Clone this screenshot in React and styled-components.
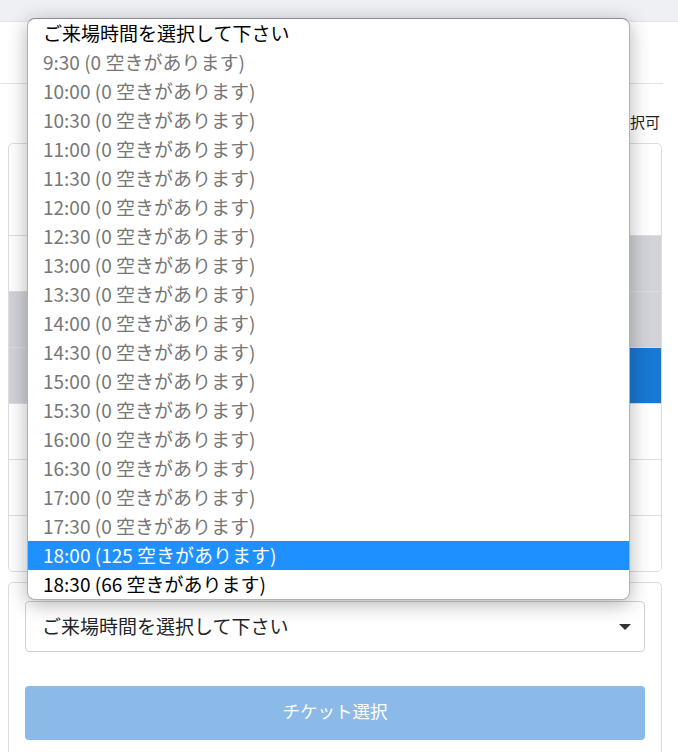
import React from 'react'
import styled, { createGlobalStyle } from 'styled-components'

const GlobalStyle = createGlobalStyle`
  html, body {
    margin: 0;
    padding: 0;
    background: #ffffff;
  }

  body {
    font-family: "Noto Sans CJK JP", "Noto Sans", sans-serif;
    color: #212529;
  }

  * {
    box-sizing: border-box;
  }
`;

const Page = styled.div`
  position: relative;
  width: 678px;
  height: 752px;
  overflow: hidden;
  background: #ffffff;
`;

const TopBar = styled.div`
  height: 22px;
  background: #eff0f4;
  border-bottom: 1px solid #e4e5ea;
`;

const Main = styled.div`
  width: 670px;
`;

const Header = styled.div`
  width: 663px;
  height: 62px;
  border-bottom: 1px solid #e2e2e6;
`;

const Legend = styled.div`
  height: 59px;
  display: flex;
  justify-content: flex-end;
  align-items: flex-end;
  gap: 14px;
  padding: 0 10px 11px 0;
  font-size: 15px;
  line-height: 20px;
  color: #222;
`;

const Card = styled.div`
  margin: 0 8px;
  border: 1px solid #dcdce1;
  border-radius: 5px;
  overflow: hidden;
  background: #fff;
`;

const CardHead = styled.div`
  height: 91px;
`;

const tones = {
  white: '#ffffff',
  gray: '#d2d3d8',
  blue: '#1878d3',
};

const Row = styled.div`
  display: flex;
  height: 56px;
  border-top: 1px solid #dcdce1;
`;

const Cell = styled.div`
  width: ${({ $w }) => ($w ? `${$w}px` : 'auto')};
  flex: ${({ $w }) => ($w ? 'none' : '1')};
  background: ${({ $tone }) => tones[$tone]};
`;

const FormCard = styled(Card)`
  margin-top: 10px;
  padding: 18px 16px 30px;
  border-bottom-left-radius: 0;
  border-bottom-right-radius: 0;
`;

const SelectBox = styled.div`
  height: 51px;
  display: flex;
  align-items: center;
  justify-content: space-between;
  padding: 0 13px 3px 16px;
  border: 1px solid #cfd0d4;
  border-radius: 4px;
  background: #fff;
  font-size: 19px;
  color: #212529;
`;

const Caret = styled.span`
  width: 0;
  height: 0;
  margin-top: 3px;
  border-left: 6px solid transparent;
  border-right: 6px solid transparent;
  border-top: 6px solid #333;
`;

const SubmitButton = styled.button`
  display: block;
  width: 100%;
  height: 54px;
  margin-top: 34px;
  padding: 0 0 5px;
  border: none;
  border-radius: 4px;
  background: #8bbae8;
  color: #ffffff;
  font-family: inherit;
  font-size: 17.5px;
  cursor: default;
`;

const ListBox = styled.ul`
  position: absolute;
  left: 27px;
  top: 18px;
  width: 603px;
  margin: 0;
  padding: 0;
  list-style: none;
  background: #ffffff;
  border: 1px solid rgba(0, 0, 0, 0.3);
  border-top-color: rgba(0, 0, 0, 0.45);
  border-radius: 8px;
  overflow: hidden;
  box-shadow: 0 4px 20px rgba(0, 0, 0, 0.3);
`;

const Option = styled.li`
  height: 29px;
  padding: 0 15px 2px;
  font-size: 19px;
  line-height: 27px;
  white-space: nowrap;
  color: ${({ $disabled, $selected }) =>
    $selected ? '#ffffff' : $disabled ? '#767676' : '#000000'};
  background: ${({ $selected }) => ($selected ? '#1e90ff' : 'transparent')};
`;

const rows = [
  ['white', 'gray'],
  ['gray', 'gray'],
  ['gray', 'blue'],
  ['white', 'white'],
  ['white', 'white'],
  ['white', 'white'],
];

const slots = [
  ['9:30', 0], ['10:00', 0], ['10:30', 0], ['11:00', 0], ['11:30', 0],
  ['12:00', 0], ['12:30', 0], ['13:00', 0], ['13:30', 0], ['14:00', 0],
  ['14:30', 0], ['15:00', 0], ['15:30', 0], ['16:00', 0], ['16:30', 0],
  ['17:00', 0], ['17:30', 0], ['18:00', 125], ['18:30', 66],
];

const PLACEHOLDER = 'ご来場時間を選択して下さい';

export default function App() {
  return (
    <>
      <GlobalStyle />
      <Page>
        <TopBar />
        <Main>
          <Header />
          <Legend>
            <span>選択可</span>
          </Legend>
          <Card>
            <CardHead />
            {rows.map(([left, right], i) => (
              <Row key={i}>
                <Cell $w={20} $tone={left} />
                <Cell $tone="white" />
                <Cell $w={32} $tone={right} />
              </Row>
            ))}
          </Card>
          <FormCard>
            <SelectBox>
              <span>{PLACEHOLDER}</span>
              <Caret />
            </SelectBox>
            <SubmitButton disabled>チケット選択</SubmitButton>
          </FormCard>
        </Main>

        <ListBox role="listbox">
          <Option>{PLACEHOLDER}</Option>
          {slots.map(([time, left]) => (
            <Option
              key={time}
              $disabled={left === 0}
              $selected={time === '18:00'}
            >
              {time} ({left} 空きがあります)
            </Option>
          ))}
        </ListBox>
      </Page>
    </>
  );
}
